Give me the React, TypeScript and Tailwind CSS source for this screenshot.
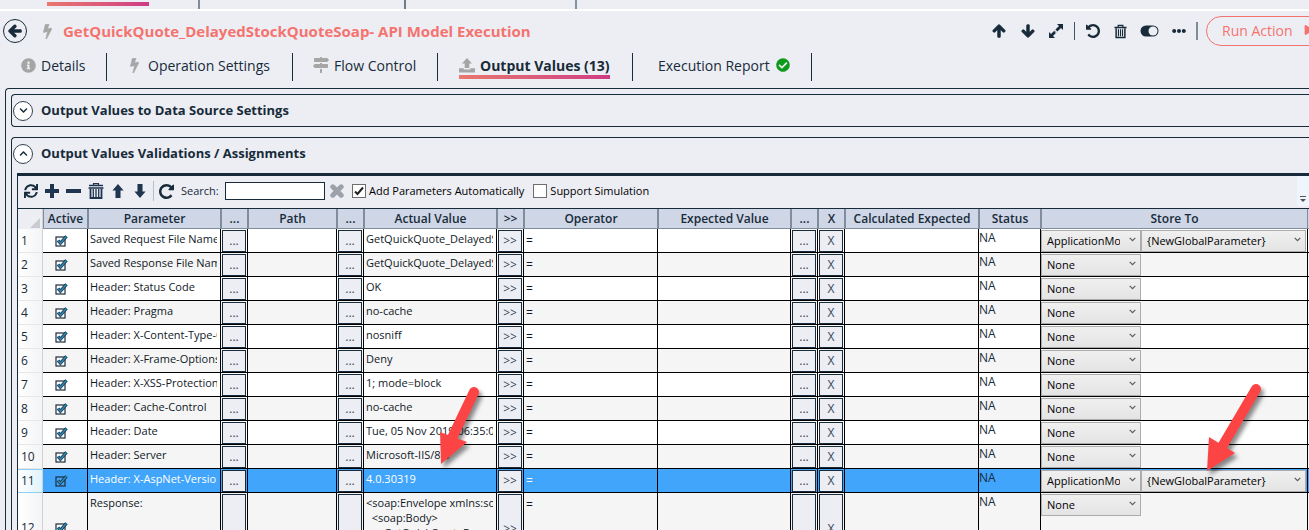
import type { ReactNode } from "react";
import {
  FaArrowDown,
  FaArrowLeft,
  FaArrowUp,
  FaCheckCircle,
  FaChevronDown,
  FaChevronUp,
  FaEllipsisH,
  FaInfoCircle,
  FaMapSigns,
  FaPlay,
  FaSync,
} from "react-icons/fa";

type IconProps = { className?: string };

function BoltIcon({ className }: IconProps) {
  return (
    <svg viewBox="0 0 896 1664" className={className} fill="currentColor" stroke="currentColor" strokeWidth="60" aria-hidden="true">
      <path d="M885 566q18 20 7 44l-540 1029q-13 25-42 25-4 0-14-2-17-5-25.500-19t-4.500-30l197-780-406 101q-4 1-12 1-18 0-31-11-18-15-13-39l201-825q4-14 16-23t28-9h328q19 0 32 12.500t13 29.500q0 8-5 18l-171 463 396-98q8-2 12-2 19 0 34 15z" />
    </svg>
  );
}

function UndoIcon({ className }: IconProps) {
  return (
    <svg viewBox="0 128 1536 1536" className={className} fill="currentColor" aria-hidden="true">
      <path d="M1536 896q0 156-61 298t-164 245-245 164-298 61q-172 0-327-72.500t-264-204.500q-7-10-6.500-22.500t8.500-20.500l137-138q10-9 25-9 16 2 23 12 73 95 179 147t225 52q104 0 198.500-40.500t163.500-109.500 109.500-163.500 40.500-198.500-40.500-198.500-109.500-163.500-163.500-109.500-198.500-40.500q-98 0-188 35.500t-160 101.500l137 138q31 30 14 69-17 40-59 40h-448q-26 0-45-19t-19-45v-448q0-42 40-59 39-17 69 14l130 129q107-101 244.500-156.500t284.500-55.500q156 0 298 61t245 164 164 245 61 298z" />
    </svg>
  );
}

function UploadIcon({ className }: IconProps) {
  return (
    <svg viewBox="0 0 16 15" className={className} fill="currentColor" aria-hidden="true">
      <path d="M8 0 13 5.500H10.300V10H5.700V5.500H3z" />
      <path d="M0 10.200h4.700v1.200h6.600v-1.200H16V14.500H0z" />
    </svg>
  );
}

function ExpandIcon({ className }: IconProps) {
  return (
    <svg viewBox="0 0 14 14" className={className} fill="currentColor" aria-hidden="true">
      <path d="M8 0h6v6l-2-2-3.600 3.600-2-2L10 2zM6 14H0V8l2 2 3.400-3.400 2 2L4 12z" />
      <path d="M5.200 7.300 7 9" stroke="#edeef4" strokeWidth="0.600" />
    </svg>
  );
}

function TrashIcon({ className }: IconProps) {
  return (
    <svg viewBox="0 0 14 15" className={className} fill="none" stroke="currentColor" aria-hidden="true">
      <path d="M4.500 2.800V1h5v1.800" strokeWidth="1.300" />
      <path d="M0.500 3.200h13" strokeWidth="1.700" />
      <path d="M2.300 4v10h9.400V4" strokeWidth="1.600" />
      <path d="M4.800 5v7.500M7 5v7.500M9.200 5v7.500" strokeWidth="1.200" />
    </svg>
  );
}

function ToggleIcon({ className }: IconProps) {
  return (
    <svg viewBox="0 0 19 12" className={className} aria-hidden="true">
      <rect x="0.500" y="0.500" width="18" height="11" rx="5.500" fill="#172b3a" />
      <circle cx="13" cy="6" r="4.500" fill="#edeef4" />
    </svg>
  );
}

function BlockArrowIcon({ className }: IconProps) {
  return (
    <svg viewBox="0 0 12 15" className={className} fill="currentColor" aria-hidden="true">
      <path d="M6 0 12 7H8.700v8H3.300V7H0z" />
    </svg>
  );
}

function BinIcon({ className }: IconProps) {
  return (
    <svg viewBox="0 0 16 16" className={className} fill="none" stroke="currentColor" aria-hidden="true">
      <path d="M5.500 2V.7h5V2" strokeWidth="1.200" />
      <path d="M1 2.500h14M.5 5h15" strokeWidth="1.400" />
      <path d="M2.500 5.500V15h11V5.500" strokeWidth="1.800" />
      <path d="M5.300 6v8.500M8 6v8.500M10.700 6v8.500" strokeWidth="1.300" />
    </svg>
  );
}

function CrossIcon({ className }: IconProps) {
  return (
    <svg viewBox="0 0 14 14" className={className} aria-hidden="true">
      <path d="m2.800 2.800 8.400 8.400m0-8.400-8.400 8.400" stroke="currentColor" strokeWidth="5" strokeLinecap="round" />
    </svg>
  );
}

function TickIcon({ className, selected }: IconProps & { selected?: boolean }) {
  return (
    <svg viewBox="0 0 13 12" className={className} fill="none" aria-hidden="true">
      <rect x="1" y="2" width="9" height="9" fill={selected ? "#41a5fc" : "#ffffff"} stroke="#1b2c3a" strokeWidth="1.200" />
      <path d="m3 5.500 2.400 2.700L11.500 1.300" stroke="#16303f" strokeWidth="3.200" />
      <path d="m3 5.500 2.400 2.700L11.500 1.300" stroke="#2f86b4" strokeWidth="1.700" />
    </svg>
  );
}

function Tab({ icon, label, className }: { icon?: ReactNode; label: string; className: string }) {
  return (
    <li className={`flex h-7 shrink-0 items-center border-r border-[#172b3a] pb-1 ${className}`}>
      <a href="#" className="flex items-center gap-[5px]">
        {icon}
        {label}
      </a>
    </li>
  );
}

function Expander({ open, title }: { open: boolean; title: string }) {
  return (
    <button type="button" aria-expanded={open} className="flex h-[31px] w-full items-center gap-2 pl-px text-left text-[13px] font-bold">
      <span className="flex size-5 items-center justify-center rounded-full border border-[#33424f] bg-white">
        {open ? <FaChevronUp className="size-[9px]" /> : <FaChevronDown className="size-[9px]" />}
      </span>
      {title}
    </button>
  );
}

function Choice({ value, label, className }: { value: string; label: string; className: string }) {
  return (
    <span className={`relative block h-[22px] ${className}`}>
      <select
        aria-label={label}
        defaultValue={value}
        className="size-full appearance-none border border-[#acacac] bg-linear-to-b from-[#f0f0f0] to-[#e4e4e4] pr-5 pl-[5px] text-[11px] text-black"
      >
        <option>{value}</option>
      </select>
      <svg viewBox="0 0 7 5" className="pointer-events-none absolute top-[7px] right-[5px] h-[5px] w-[7px]" fill="none" aria-hidden="true">
        <path d="m.7.8 2.800 2.800L6.300.8" stroke="#5c5c5c" strokeWidth="1.200" />
      </svg>
    </span>
  );
}

type Row = { name: string; value: string; store?: boolean; selected?: boolean; tall?: boolean };

const rows: Row[] = [
  { name: "Saved Request File Name", value: "GetQuickQuote_DelayedStockQuoteSoap", store: true },
  { name: "Saved Response File Name", value: "GetQuickQuote_DelayedStockQuoteSoap" },
  { name: "Header: Status Code", value: "OK" },
  { name: "Header: Pragma", value: "no-cache" },
  { name: "Header: X-Content-Type-Options", value: "nosniff" },
  { name: "Header: X-Frame-Options", value: "Deny" },
  { name: "Header: X-XSS-Protection", value: "1; mode=block" },
  { name: "Header: Cache-Control", value: "no-cache" },
  { name: "Header: Date", value: "Tue, 05 Nov 2019 06:35:01 GMT" },
  { name: "Header: Server", value: "Microsoft-IIS/8.5" },
  { name: "Header: X-AspNet-Version", value: "4.0.30319", store: true, selected: true },
  {
    name: "Response:",
    value: "<soap:Envelope xmlns:soap=\n  <soap:Body>\n    <GetQuickQuoteResponse>\n  </soap:Body>",
    tall: true,
  },
];

const columns = [
  { title: "Active", width: "w-[45px]" },
  { title: "Parameter", width: "w-[133px]" },
  { title: "...", width: "w-[27px]" },
  { title: "Path", width: "w-[89px]" },
  { title: "...", width: "w-[27px]" },
  { title: "Actual Value", width: "w-[133px]" },
  { title: ">>", width: "w-[27px]" },
  { title: "Operator", width: "w-[134px]" },
  { title: "Expected Value", width: "w-[133px]" },
  { title: "...", width: "w-[27px]" },
  { title: "X", width: "w-[27px]" },
  { title: "Calculated Expected", width: "w-[134px]" },
  { title: "Status", width: "w-[62px]" },
  { title: "Store To", width: "w-[267px]" },
];

const cell = "border-r border-b border-black p-0";

function ButtonCell({ label, tall }: { label: string; tall?: boolean }) {
  return (
    <td className={`${cell} px-px pt-px align-top`}>
      <button
        type="button"
        className={`block w-full border border-[#172b3a] bg-[#edeef4] text-[12px] leading-5 text-[#3a4956] ${tall ? "h-[69px]" : "h-[22px]"}`}
      >
        {label}
      </button>
    </td>
  );
}

function TextCell({ text, className = "pt-[2px] text-[11px]" }: { text: string; className?: string }) {
  return (
    <td className={`${cell} align-top`}>
      <div className={`mr-[3px] overflow-hidden pl-[2px] leading-[15px] whitespace-pre ${className}`}>{text}</div>
    </td>
  );
}

function GridRow({ row, index }: { row: Row; index: number }) {
  const tone = row.selected ? "bg-[#41a5fc]" : index % 2 ? "bg-[#f5f5f5]" : "bg-white";
  const ink = row.selected ? "text-white" : "text-[#10181f]";
  const head = row.selected
    ? "border-y border-[#8fd0f2] from-white to-[#dff3fc]"
    : "border-b border-[#e6e7ea] from-white to-[#f3f4f5]";
  return (
    <tr className={`${row.tall ? "h-[71px]" : "h-6"} ${tone} ${ink}`}>
      <th scope="row" className={`border-r border-r-[#d0d2d6] bg-linear-to-r p-0 pl-[3px] text-left font-normal text-[#172b3a] ${head}`}>
        {index + 1}
      </th>
      <td className={cell}>
        <label className="flex items-center justify-center pr-2">
          <input type="checkbox" defaultChecked className="sr-only" aria-label={`Active ${row.name}`} />
          <TickIcon className="h-3 w-[13px]" selected={row.selected} />
        </label>
      </td>
      <TextCell text={row.name} />
      <ButtonCell label="..." tall={row.tall} />
      <td className={cell} />
      <ButtonCell label="..." tall={row.tall} />
      <TextCell text={row.value} />
      <ButtonCell label=">>" tall={row.tall} />
      <TextCell text="=" className="pt-1 text-[12px]" />
      <td className={cell} />
      <ButtonCell label="..." tall={row.tall} />
      <ButtonCell label="X" tall={row.tall} />
      <td className={cell} />
      <td className={`${cell} align-top`}>
        <div className="pt-px leading-4 text-[#172b3a]">NA</div>
      </td>
      <td className={`${cell} pt-px align-top`}>
        <div className="flex">
          <Choice label={`Store type for ${row.name}`} value={row.store ? "ApplicationModel" : "None"} className="w-[100px]" />
          {row.store && <Choice label={`Store target for ${row.name}`} value="{NewGlobalParameter}" className="w-[165px]" />}
        </div>
      </td>
      <td className="border-b border-black p-0" />
    </tr>
  );
}

function Pointer({ points, line, className }: { points: string; line: string; className: string }) {
  return (
    <svg viewBox="0 0 64 100" className={`pointer-events-none absolute h-[100px] w-16 drop-shadow-[3px_4px_2px_rgba(0,0,0,0.45)] ${className}`} aria-hidden="true">
      <path d={line} stroke="#fd4444" strokeWidth="10" strokeLinecap="round" />
      <polygon points={points} fill="#fd4444" />
    </svg>
  );
}

export default function App() {
  return (
    <div className="relative flex h-screen flex-col overflow-hidden bg-[#edeef4] font-['Open_Sans','Noto_Sans',sans-serif] text-[12px] text-[#172b3a]">
      <div className="flex h-[11px] shrink-0 border-b-2 border-white">
        <div className="w-[200px] border-r-2 border-[#7f8d97] pl-[47px]">
          <div className="mt-[2px] h-1 w-[102px] bg-linear-to-r from-[#e9776d] to-[#cf3a83]" />
        </div>
        <div className="w-[206px] border-r-2 border-[#6d7c88]" />
        <div className="w-[171px] border-r-2 border-[#8593a0]" />
      </div>

      <header className="flex h-10 shrink-0 items-center pl-[3px]">
        <button type="button" aria-label="Back" className="flex size-6 shrink-0 items-center justify-center rounded-full border border-[#172b3a]">
          <FaArrowLeft className="size-[14px]" stroke="currentColor" strokeWidth="45" />
        </button>
        <BoltIcon className="ml-4 h-[15px] w-[9px] shrink-0 text-[#a5a5a5]" />
        <h1 className="ml-[11px] text-[15px] font-bold whitespace-nowrap text-[#f4736f]">
          GetQuickQuote_DelayedStockQuoteSoap- API Model Execution
        </h1>
        <div className="ml-auto flex shrink-0 items-center">
          <button type="button" aria-label="Move up"><FaArrowUp className="size-[14px]" stroke="currentColor" strokeWidth="45" /></button>
          <button type="button" aria-label="Move down" className="ml-[15px]"><FaArrowDown className="size-[14px]" stroke="currentColor" strokeWidth="45" /></button>
          <button type="button" aria-label="Expand" className="ml-[14px]"><ExpandIcon className="size-[14px]" /></button>
          <span className="ml-[11px] h-[18px] w-px bg-[#44545f]" />
          <button type="button" aria-label="Undo" className="ml-[11px]"><UndoIcon className="size-[14px]" /></button>
          <button type="button" aria-label="Delete" className="ml-[14px]"><TrashIcon className="h-[15px] w-[13px]" /></button>
          <button type="button" aria-label="Toggle" className="ml-[13px]"><ToggleIcon className="h-3 w-[19px]" /></button>
          <button type="button" aria-label="More" className="ml-[13px]"><FaEllipsisH className="size-[14px]" /></button>
          <span className="ml-[10px] h-[18px] w-[2px] bg-[#7f8d97]" />
          <button type="button" className="-mr-[17px] ml-2 flex h-[30px] w-[120px] items-center gap-[11px] rounded-full border border-[#f4736f] pb-[2px] pl-[15px] text-[14px] whitespace-nowrap text-[#f4736f]">
            Run Action
            <FaPlay className="size-[10px]" />
          </button>
        </div>
      </header>

      <nav className="h-[37px] shrink-0">
        <ul className="flex pt-[2px] text-[14px] whitespace-nowrap">
          <Tab className="w-[107px] pl-[21px]" icon={<FaInfoCircle className="size-[15px] text-[#a5a5a5]" />} label="Details" />
          <Tab className="w-[186px] pl-[23px]" icon={<BoltIcon className="mr-1 h-[15px] w-[9px] text-[#a5a5a5]" />} label="Operation Settings" />
          <Tab className="w-[145px] pl-5" icon={<FaMapSigns className="size-4 text-[#a5a5a5]" />} label="Flow Control" />
          <li className="flex h-7 w-[195px] shrink-0 items-start border-r border-[#172b3a] pl-[21px]">
            <a href="#" aria-current="page" className="relative flex h-[26px] items-center gap-[5px] pb-[2px] font-bold">
              <UploadIcon className="h-[15px] w-4 text-[#a5a5a5]" />
              Output Values (13)
              <span className="absolute inset-x-0 bottom-0 h-1 bg-linear-to-r from-[#e9776d] to-[#cf3a83]" />
            </a>
          </li>
          <li className="flex h-7 w-[179px] shrink-0 items-center border-r border-[#172b3a] pb-1 pl-[25px]">
            <a href="#" className="flex items-center gap-[6px]">
              Execution Report
              <FaCheckCircle className="size-[14px] text-[#0f9a1c]" />
            </a>
          </li>
        </ul>
      </nav>

      <main className="ml-[5px] flex min-h-0 flex-1 flex-col rounded-tl-[4px] border-t border-l border-[#172b3a] pt-[5px] pl-[5px]">
        <section className="shrink-0 rounded-l-[4px] border-y border-l border-[#172b3a]">
          <Expander open={false} title="Output Values to Data Source Settings" />
        </section>

        <section className="mt-[10px] flex min-h-0 flex-1 flex-col rounded-tl-[4px] border-t border-l border-[#172b3a]">
          <Expander open title="Output Values Validations / Assignments" />

          <div className="mt-1 ml-[5px] min-h-0 flex-1 overflow-hidden border-t-3 border-l border-[#172b3a]">
            <div className="flex h-[33px] items-center border-b border-[#172b3a] pb-[2px] pl-[6px]">
              <button type="button" aria-label="Refresh"><FaSync className="size-[14px]" /></button>
              <button type="button" aria-label="Add" className="ml-[7px] text-[#1f3550]">
                <svg viewBox="0 0 14 14" className="size-[14px]" fill="currentColor" aria-hidden="true"><path d="M5 0h4v5h5v4H9v5H5V9H0V5h5z" /></svg>
              </button>
              <button type="button" aria-label="Remove" className="ml-[7px] text-[#1f3550]">
                <svg viewBox="0 0 15 14" className="h-[14px] w-[15px]" fill="currentColor" aria-hidden="true"><path d="M0 5h15v4H0z" /></svg>
              </button>
              <button type="button" aria-label="Clear" className="ml-[7px] text-[#1f3550]"><BinIcon className="size-4" /></button>
              <button type="button" aria-label="Up" className="ml-2 text-[#1f3550]"><BlockArrowIcon className="h-[14px] w-3" /></button>
              <button type="button" aria-label="Down" className="ml-[10px] text-[#1f3550]"><BlockArrowIcon className="h-[14px] w-3 rotate-180" /></button>
              <span className="ml-[7px] h-5 w-px bg-[#b9bec6]" />
              <button type="button" aria-label="Reload" className="ml-[5px]"><UndoIcon className="size-[15px] -scale-x-100" /></button>
              <label htmlFor="search" className="ml-[7px] w-11 text-[11px]">Search:</label>
              <input id="search" type="text" className="h-[18px] w-[100px] border border-[#172b3a] bg-white px-1" />
              <button type="button" aria-label="Clear search" className="ml-[5px] text-[#9da1a9]"><CrossIcon className="size-[14px]" /></button>
              <label className="ml-2 flex items-center gap-[3px] text-[11px] whitespace-nowrap text-black">
                <span className="relative flex">
                  <input type="checkbox" defaultChecked className="peer size-[14px] appearance-none border border-[#6e6e6e] bg-white" />
                  <svg viewBox="0 0 14 14" className="pointer-events-none absolute inset-0 hidden size-[14px] peer-checked:block" fill="none" aria-hidden="true">
                    <path d="M3 7.500 5.500 10 11 3.500" stroke="#212121" strokeWidth="2" />
                  </svg>
                </span>
                Add Parameters Automatically
              </label>
              <label className="ml-[9px] flex items-center gap-[3px] text-[11px] whitespace-nowrap text-black">
                <input type="checkbox" className="size-[14px] appearance-none border border-[#6e6e6e] bg-white" />
                Support Simulation
              </label>
              <span className="ml-auto flex h-full w-3 items-end justify-center bg-[#eef5fd] pb-1">
                <svg viewBox="0 0 6 6" className="size-[6px]" fill="#555" aria-hidden="true"><path d="M0 0h6v1H0zM0 3h6L3 6z" /></svg>
              </span>
            </div>

            <table className="w-full table-fixed border-separate border-spacing-0">
              <colgroup>
                <col className="w-[25px]" />
                {columns.map((c, i) => <col key={i} className={c.width} />)}
                <col />
              </colgroup>
              <thead>
                <tr className="h-5">
                  <td className="border-r border-[#d0d2d6] p-0">
                    <svg viewBox="0 0 10 10" className="mt-2 ml-3 size-[10px]" aria-hidden="true"><path d="M10 0v10H0z" fill="#c9cbd0" /></svg>
                  </td>
                  {columns.map((c, i) => (
                    <th key={i} scope="col" className="border-x border-b border-[#7f8d9c] bg-[#cfd6e5] p-0 text-[12px] leading-[18px] font-semibold whitespace-nowrap">
                      {c.title}
                    </th>
                  ))}
                  <td className="border-b border-[#7f8d9c] bg-[#cfd6e5] p-0" />
                </tr>
              </thead>
              <tbody>
                {rows.map((row, i) => <GridRow key={row.name} row={row} index={i} />)}
              </tbody>
            </table>
          </div>
        </section>
      </main>

      <Pointer className="top-[380px] left-[430px]" line="M44 12 22 58" points="10,52 11,84 37,62" />
      <Pointer className="top-[380px] left-[1200px]" line="M56 9 23 65" points="9,57 7,91 35,73" />
    </div>
  );
}
